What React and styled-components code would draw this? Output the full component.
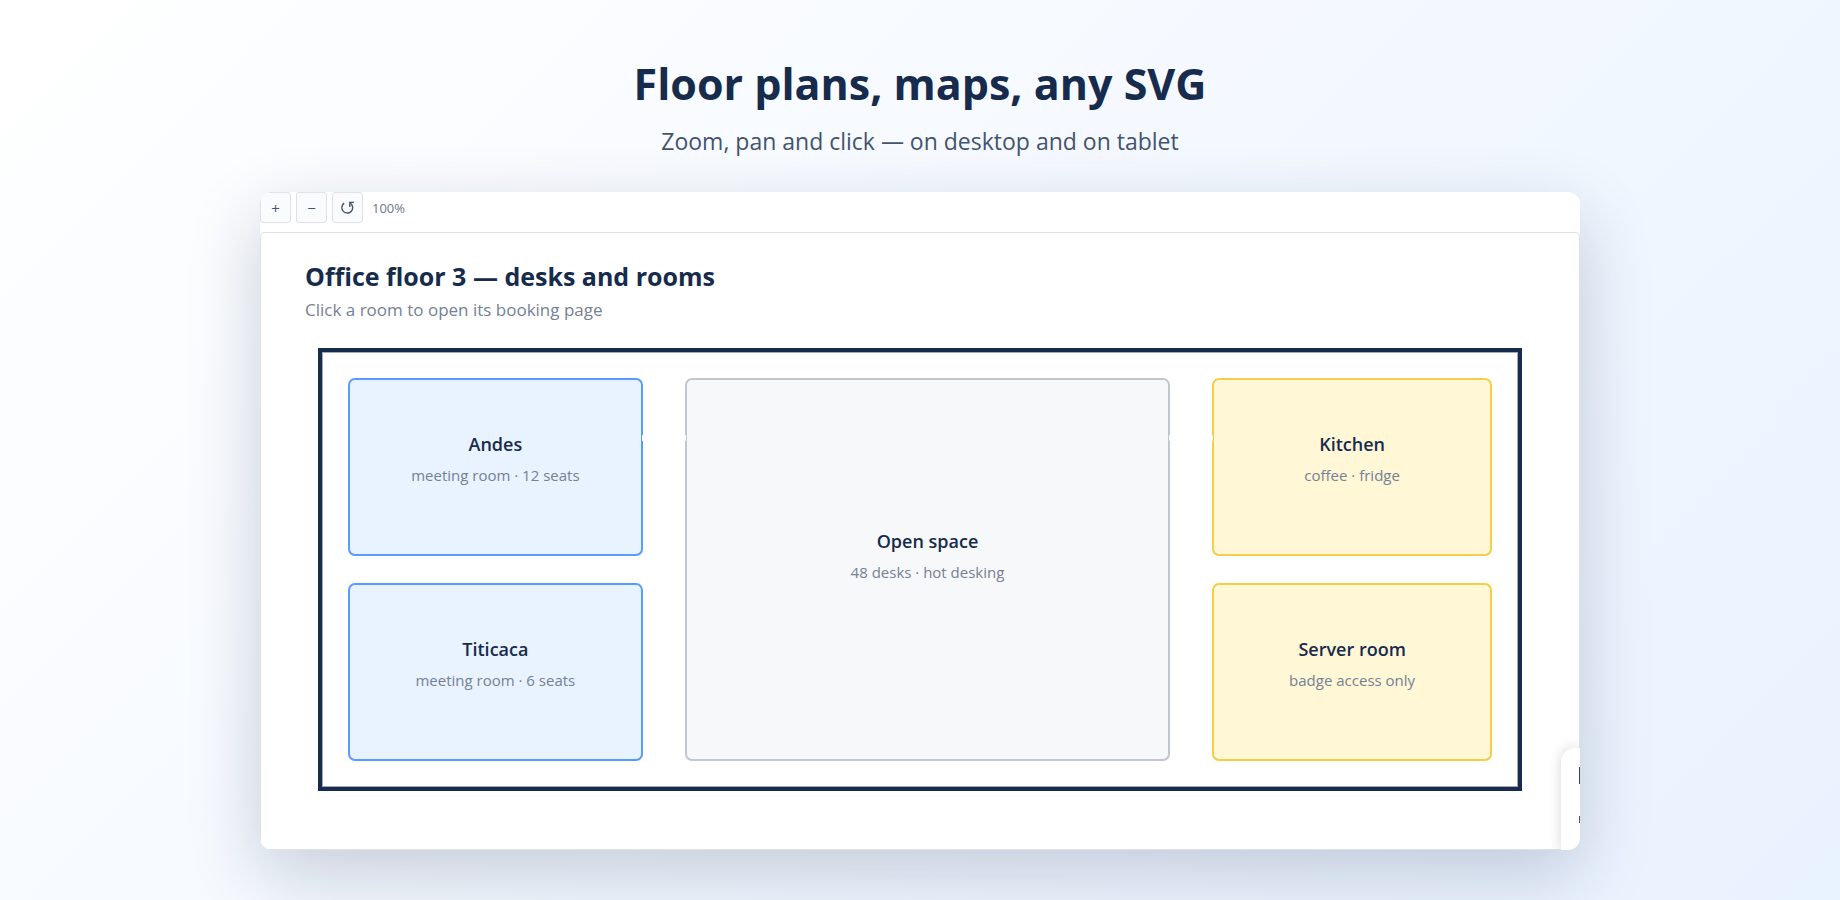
import React, { useState } from 'react';
import styled, { createGlobalStyle, ThemeProvider } from 'styled-components';

const theme = {
  colors: {
    navy: '#172b4d',
    subtle: '#44546f',
    muted: '#758195',
    border: '#dfe1e6',
  },
};

const rooms = [
  { id: 'andes', name: 'Andes', note: 'meeting room · 12 seats', kind: 'meeting' },
  { id: 'open-space', name: 'Open space', note: '48 desks · hot desking', kind: 'open' },
  { id: 'kitchen', name: 'Kitchen', note: 'coffee · fridge', kind: 'service' },
  { id: 'titicaca', name: 'Titicaca', note: 'meeting room · 6 seats', kind: 'meeting' },
  { id: 'server-room', name: 'Server room', note: 'badge access only', kind: 'service' },
];

const palette = {
  meeting: { fill: '#e9f2ff', stroke: '#579dff' },
  open: { fill: '#f7f8f9', stroke: '#c1c7d0' },
  service: { fill: '#fff7d6', stroke: '#f5cd47' },
};

const ResetIcon = () => (
  <svg width="14" height="14" viewBox="0 0 14 14" fill="none" stroke="currentColor" strokeWidth="1.4" aria-hidden="true">
    <path d="M3.2 2.2A5.4 5.4 0 1 0 9.6 2.4" />
    <path d="M13 1.4H8.8V6" />
  </svg>
);

export default function App () {
  const [zoom, setZoom] = useState(100);

  return (
    <ThemeProvider theme={theme}>
      <GlobalStyle />
      <Page>
        <Title>Floor plans, maps, any SVG</Title>
        <Tagline>Zoom, pan and click — on desktop and on tablet</Tagline>
        <Frame>
          <Toolbar>
            <ToolButton type="button" aria-label="Zoom in" onClick={() => setZoom(zoom + 10)}>+</ToolButton>
            <ToolButton type="button" aria-label="Zoom out" onClick={() => setZoom(Math.max(10, zoom - 10))}>−</ToolButton>
            <ToolButton type="button" aria-label="Reset zoom" onClick={() => setZoom(100)}>
              <ResetIcon />
            </ToolButton>
            <ZoomLevel>{zoom}%</ZoomLevel>
          </Toolbar>
          <Viewport>
            <PlanTitle>Office floor 3 — desks and rooms</PlanTitle>
            <PlanHint>Click a room to open its booking page</PlanHint>
            <Walls>
              {rooms.map(({ id, name, note, kind }) => (
                <Room key={id} href={`#${id}`} $kind={kind}>
                  <RoomName>{name}</RoomName>
                  <RoomNote>{note}</RoomNote>
                </Room>
              ))}
            </Walls>
          </Viewport>
          <SidePanel aria-hidden="true">
            <PanelBar />
            <PanelDot />
          </SidePanel>
        </Frame>
      </Page>
    </ThemeProvider>
  );
}

const GlobalStyle = createGlobalStyle`
  * {
    box-sizing: border-box;
  }
  body {
    margin: 0;
    font-family: 'Open Sans', 'Noto Sans', sans-serif;
    color: ${theme.colors.navy};
  }
`;

const Page = styled.main`
  display: flex;
  flex-direction: column;
  align-items: center;
  min-height: 100vh;
  padding: 54px 40px 50px;
  background: linear-gradient(135deg, #ffffff 0%, #e9f2ff 100%);
`;

const Title = styled.h1`
  margin: 0;
  font-size: 43px;
  font-weight: 700;
  line-height: 60px;
`;

const Tagline = styled.p`
  margin: 11px 0 35px;
  font-size: 23px;
  line-height: 32px;
  color: ${({ theme }) => theme.colors.subtle};
`;

const Frame = styled.section`
  position: relative;
  width: 100%;
  max-width: 1320px;
  overflow: hidden;
  background: white;
  border-radius: 12px;
  box-shadow: 0 24px 72px rgba(9, 30, 66, 0.2);
`;

const Toolbar = styled.div`
  display: flex;
  align-items: center;
  gap: 5px;
  padding-bottom: 9px;
`;

const ToolButton = styled.button`
  display: flex;
  align-items: center;
  justify-content: center;
  width: 31px;
  height: 31px;
  padding: 0;
  border: 1px solid ${({ theme }) => theme.colors.border};
  border-radius: 3px;
  background: #fafbfc;
  color: ${({ theme }) => theme.colors.subtle};
  font-family: inherit;
  font-size: 15px;
  cursor: pointer;
`;

const ZoomLevel = styled.output`
  padding-left: 4px;
  font-size: 13px;
  color: #6b778c;
`;

const Viewport = styled.div`
  padding: 27px 44px 58px;
  border: 1px solid ${({ theme }) => theme.colors.border};
  border-radius: 4px;
`;

const PlanTitle = styled.h2`
  margin: 0;
  font-size: 25px;
  font-weight: 700;
  line-height: 32px;
`;

const PlanHint = styled.p`
  margin: 6px 0 26px;
  font-size: 17px;
  line-height: 24px;
  color: ${({ theme }) => theme.colors.muted};
`;

const Walls = styled.div`
  display: grid;
  grid-template-columns: 295fr 486fr 280fr;
  grid-auto-rows: 178px;
  gap: 27px 42px;
  margin: 0 13px;
  padding: 26px;
  border: 4px solid ${({ theme }) => theme.colors.navy};
  box-shadow: inset 0 0 0 1px rgba(23, 43, 77, 0.4);
`;

const Room = styled.a`
  display: flex;
  flex-direction: column;
  align-items: center;
  justify-content: center;
  gap: 6px;
  padding-bottom: 16px;
  border: 2px solid ${({ $kind }) => palette[$kind].stroke};
  border-radius: 7px;
  background: ${({ $kind }) => palette[$kind].fill};
  color: inherit;
  text-decoration: none;

  ${({ $kind }) => $kind === 'open' && `
    position: relative;
    grid-row: span 2;
    padding-bottom: 28px;

    /* door openings towards the neighbouring rooms */
    &::before,
    &::after {
      content: '';
      position: absolute;
      top: 55px;
      width: 44px;
      height: 6px;
      border-radius: 1px;
      background: white;
    }
    &::before {
      left: -45px;
    }
    &::after {
      right: -45px;
    }
  `}
`;

const RoomName = styled.span`
  font-size: 18px;
  font-weight: 600;
  line-height: 26px;
`;

const RoomNote = styled.span`
  font-size: 15px;
  line-height: 24px;
  color: ${({ theme }) => theme.colors.muted};
`;

/* panel docked to the right edge, only its rim stays visible */
const SidePanel = styled.div`
  position: absolute;
  right: 0;
  bottom: 0;
  display: flex;
  flex-direction: column;
  align-items: flex-end;
  gap: 32px;
  width: 19px;
  height: 102px;
  padding-top: 19px;
  background: white;
  border-radius: 14px 0 0 0;
  box-shadow: 0 0 14px rgba(0, 0, 0, 0.16);
`;

const PanelBar = styled.span`
  width: 1px;
  height: 17px;
  background: #44444c;
`;

const PanelDot = styled.span`
  width: 1px;
  height: 7px;
  background: #55555c;
`;
